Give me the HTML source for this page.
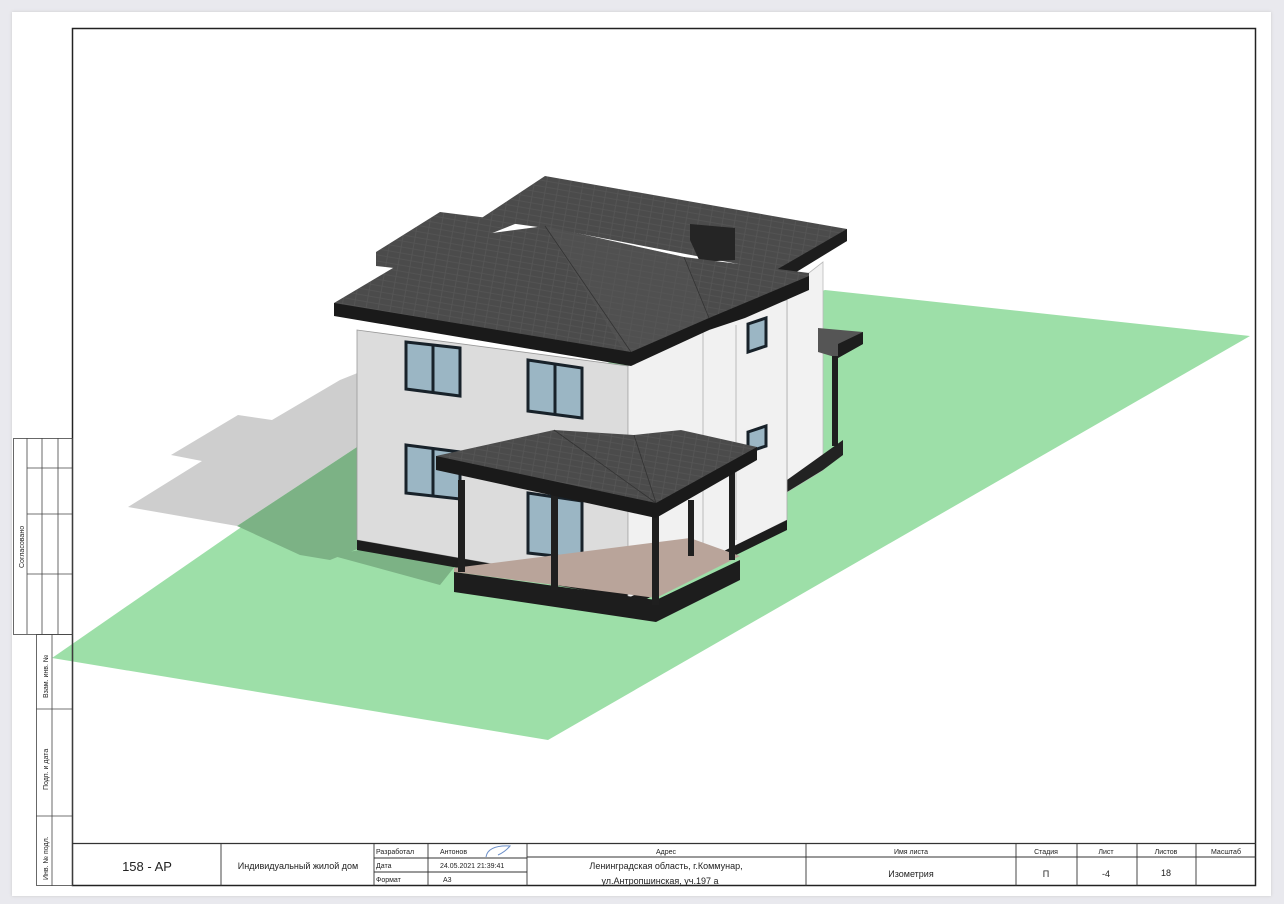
<!DOCTYPE html>
<html><head><meta charset="utf-8"><style>
html,body{margin:0;padding:0}
body{width:1284px;height:904px;background:#e9e9ee;position:relative;overflow:hidden;font-family:"Liberation Sans","DejaVu Sans",sans-serif;}
.paper{position:absolute;left:12px;top:12px;width:1259px;height:884px;background:#fff;box-shadow:0 0 3px #ccc;}
svg{position:absolute;left:0;top:0}
.t{font-family:"Liberation Sans","DejaVu Sans",sans-serif;fill:#222}
</style></head><body>
<div class="paper"></div>
<svg width="1284" height="904" viewBox="0 0 1284 904">
<defs>
<pattern id="sh" width="12" height="6" patternUnits="userSpaceOnUse" patternTransform="rotate(10)">
<rect width="12" height="6" fill="#4b4b4b"/>
<path d="M0 5.5H12M6 0V5.5" stroke="#5a5a5a" stroke-width="0.6"/>
</pattern>
</defs>
<!-- site -->
<polygon points="52,658 357,447 825,290 1250,336 548,740" fill="#9ddfa8"/>
<!-- shadow -->
<polygon points="128,507 202,461 171,455 238,415 272,420 340,380 360,372 357,447 237,526" fill="#cecece"/>
<polygon points="237,526 357,447 360,548 330,560 300,555" fill="#7cb285"/>
<polygon points="330,555 420,540 460,560 440,585" fill="#7cb285"/>
<!-- far right wall -->
<polygon points="787,290 823,262 823,470 787,492" fill="#f2f2f2" stroke="#bbb" stroke-width="0.8"/>
<polygon points="787,492 823,470 843,455 843,440 787,480" fill="#222"/>
<!-- side porch right -->
<polygon points="818,328 863,332 863,344 838,358 818,352" fill="#555"/>
<polygon points="838,344 863,332 863,344 838,358" fill="#1d1d1d"/>
<rect x="832" y="356" width="6" height="90" fill="#1f1f1f"/>
<!-- left wall -->
<polygon points="357,330 628,366 628,588 357,540" fill="#dcdcdc" stroke="#999" stroke-width="0.8"/>
<polygon points="357,540 628,588 628,598 357,550" fill="#1d1d1d"/>
<!-- right wall -->
<polygon points="628,366 709,318 787,300 787,520 628,600" fill="#f1f1f1" stroke="#aaa" stroke-width="0.8"/>
<line x1="703" y1="330" x2="703" y2="555" stroke="#bbb"/>
<line x1="736" y1="325" x2="736" y2="540" stroke="#bbb"/>
<polygon points="628,598 787,520 787,530 628,608" fill="#1d1d1d"/>
<!-- windows -->
<g fill="#9bb6c4" stroke="#18222a" stroke-width="3">
<polygon points="406,342 460,348 460,396 406,389"/>
<polygon points="528,360 582,368 582,418 528,411"/>
<polygon points="406,445 460,452 460,499 406,493"/>
<polygon points="528,493 582,501 582,559 528,553"/>
<polygon points="748,324 766,318 766,346 748,352"/>
<polygon points="748,432 766,426 766,446 748,452"/>
</g>
<g stroke="#18222a" stroke-width="3">
<line x1="433" y1="345" x2="433" y2="393"/><line x1="555" y1="364" x2="555" y2="415"/>
<line x1="433" y1="449" x2="433" y2="496"/><line x1="555" y1="497" x2="555" y2="556"/>
</g>
<!-- main roof back -->
<polygon points="376,252 440,212 520,222 420,262 394,268 376,266" fill="url(#sh)"/>
<polygon points="545,176 847,229 847,241 780,272 560,230 480,219" fill="url(#sh)"/>
<polygon points="776,270 847,229 847,241 780,282" fill="#1d1d1d"/>
<!-- chimney -->
<polygon points="690,224 735,228 735,260 700,262 690,240" fill="#252525"/>
<!-- main front roof -->
<polygon points="334,303 440,240 545,226 684,257 809,273 809,287 709,318 709,330 631,362 334,312" fill="url(#sh)"/>
<polygon points="545,226 684,257 709,318 631,362" fill="#555" opacity="0.5"/>
<line x1="545" y1="226" x2="631" y2="352" stroke="#333" stroke-width="0.8"/>
<line x1="684" y1="257" x2="709" y2="318" stroke="#333" stroke-width="0.8"/>
<polygon points="334,303 631,352 631,366 334,316" fill="#1a1a1a"/>
<polygon points="631,352 709,318 709,330 631,366" fill="#1a1a1a"/>
<polygon points="709,318 809,276 809,290 745,318 709,330" fill="#1a1a1a"/>
<!-- porch deck -->
<polygon points="454,568 690,538 740,556 656,598 454,572" fill="#b9a49a"/>
<polygon points="454,572 656,600 656,622 454,592" fill="#1d1d1d"/>
<polygon points="656,600 740,560 740,580 656,622" fill="#1d1d1d"/>
<!-- porch posts -->
<g fill="#1f1f1f">
<rect x="458" y="480" width="7" height="92"/>
<rect x="551" y="495" width="7" height="95"/>
<rect x="652" y="510" width="7" height="95"/>
<rect x="688" y="500" width="6" height="56"/>
<rect x="729" y="470" width="6" height="90"/>
</g>
<!-- porch roof -->
<polygon points="436,456 554,430 634,435 681,430 757,447 757,454 656,513 436,466" fill="url(#sh)"/>
<line x1="554" y1="430" x2="656" y2="503" stroke="#333" stroke-width="0.8"/>
<line x1="634" y1="435" x2="656" y2="503" stroke="#333" stroke-width="0.8"/>
<polygon points="436,456 656,503 656,518 436,470" fill="#1a1a1a"/>
<polygon points="656,503 757,447 757,460 656,518" fill="#1a1a1a"/>
<!-- frame -->
<rect x="72.5" y="28.5" width="1183" height="857" fill="none" stroke="#222" stroke-width="1.5"/>
<!-- left side stamp -->
<g fill="none" stroke="#444" stroke-width="0.8">
<rect x="13.5" y="438.5" width="59" height="196"/>
<line x1="27" y1="438" x2="27" y2="634"/><line x1="42" y1="438" x2="42" y2="634"/><line x1="58" y1="438" x2="58" y2="634"/>
<line x1="27" y1="468" x2="72" y2="468"/><line x1="27" y1="514" x2="72" y2="514"/><line x1="27" y1="574" x2="72" y2="574"/>
<rect x="36.5" y="634.5" width="36" height="251"/><line x1="52" y1="634" x2="52" y2="886"/>
<line x1="36" y1="709" x2="72" y2="709"/><line x1="36" y1="816" x2="72" y2="816"/>
</g>
<g class="t" font-size="7">
<text transform="translate(24,568) rotate(-90)">Согласовано</text>
<text transform="translate(48,698) rotate(-90)">Взам. инв. №</text>
<text transform="translate(48,790) rotate(-90)">Подп. и дата</text>
<text transform="translate(48,880) rotate(-90)">Инв. № подл.</text>
</g>
<!-- title block -->
<g fill="none" stroke="#333" stroke-width="0.9">
<line x1="72" y1="843.5" x2="1256" y2="843.5" stroke-width="1.3"/>
<line x1="221" y1="843" x2="221" y2="886"/>
<line x1="374" y1="843" x2="374" y2="886"/>
<line x1="428" y1="843" x2="428" y2="886"/>
<line x1="527" y1="843" x2="527" y2="886"/>
<line x1="806" y1="843" x2="806" y2="886"/>
<line x1="1016" y1="843" x2="1016" y2="886"/>
<line x1="1077" y1="843" x2="1077" y2="886"/>
<line x1="1137" y1="843" x2="1137" y2="886"/>
<line x1="1196" y1="843" x2="1196" y2="886"/>
<line x1="374" y1="858" x2="527" y2="858"/><line x1="374" y1="872" x2="527" y2="872"/>
<line x1="527" y1="857" x2="1256" y2="857"/>
</g>
<path d="M486 857 Q488 845 510 846 Q505 852 498 855" fill="none" stroke="#6c8fc8" stroke-width="1"/>
<g class="t">
<text x="147" y="871" font-size="13" text-anchor="middle">158 - AP</text>
<text x="298" y="869" font-size="9" text-anchor="middle">Индивидуальный жилой дом</text>
<g font-size="7">
<text x="376" y="854">Разработал</text><text x="440" y="854">Антонов</text>
<text x="376" y="868">Дата</text><text x="440" y="868">24.05.2021 21:39:41</text>
<text x="376" y="882">Формат</text><text x="443" y="882">А3</text>
<text x="666" y="854" text-anchor="middle">Адрес</text>
<text x="911" y="854" text-anchor="middle">Имя листа</text>
<text x="1046" y="854" text-anchor="middle">Стадия</text>
<text x="1106" y="854" text-anchor="middle">Лист</text>
<text x="1166" y="854" text-anchor="middle">Листов</text>
<text x="1226" y="854" text-anchor="middle">Масштаб</text>
</g>
<g font-size="9">
<text x="666" y="869" text-anchor="middle">Ленинградская область, г.Коммунар,</text>
<text x="660" y="884" text-anchor="middle">ул.Антропшинская, уч.197 а</text>
<text x="911" y="877" text-anchor="middle">Изометрия</text>
<text x="1046" y="877" text-anchor="middle">П</text>
<text x="1106" y="877" text-anchor="middle">-4</text>
<text x="1166" y="876" text-anchor="middle">18</text>
</g>
</g>
</svg>
</body></html>
